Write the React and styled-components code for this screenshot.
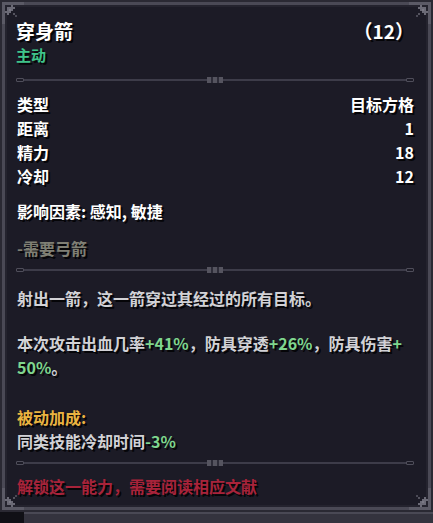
import styled, { createGlobalStyle } from 'styled-components';

const GlobalStyle = createGlobalStyle`
  html, body {
    margin: 0;
    padding: 0;
    background: #101016;
  }
  #root {
    width: 433px;
    height: 523px;
  }
`;

const Corner = ({ flipX, flipY }) => (
  <CornerSvg
    $flipX={flipX}
    $flipY={flipY}
    width="22"
    height="22"
    viewBox="0 0 22 22"
    shapeRendering="crispEdges"
  >
    <rect x="0" y="0" width="22" height="3" fill="#5b5a66" />
    <rect x="0" y="0" width="3" height="22" fill="#5b5a66" />
    <rect x="5" y="5" width="8" height="2" fill="#6b6a76" />
    <rect x="5" y="5" width="2" height="8" fill="#6b6a76" />
    <rect x="9" y="3" width="2" height="6" fill="#6b6a76" />
    <rect x="3" y="9" width="6" height="2" fill="#6b6a76" />
    <rect x="7" y="7" width="2" height="2" fill="#7a7985" />
    <rect x="11" y="11" width="2" height="2" fill="#55545f" />
    <rect x="13" y="13" width="2" height="2" fill="#4a4955" />
  </CornerSvg>
);

const Divider = ({ mt }) => (
  <DividerRow $mt={mt}>
    <Cap />
    <Line />
    <Knot />
    <Line />
    <Cap />
  </DividerRow>
);

const App = () => (
  <>
    <GlobalStyle />
    <Page>
      <Card>
        <Corner />
        <Corner flipX />
        <Corner flipY />
        <Corner flipX flipY />
        <Content>
          <TitleRow>
            <Title>穿身箭</Title>
            <Title>（12）</Title>
          </TitleRow>
          <Tag>主动</Tag>
          <Divider mt={10} />
          <Stats>
            <StatRow><span>类型</span><span>目标方格</span></StatRow>
            <StatRow><span>距离</span><span>1</span></StatRow>
            <StatRow><span>精力</span><span>18</span></StatRow>
            <StatRow><span>冷却</span><span>12</span></StatRow>
          </Stats>
          <Factors>影响因素: 感知, 敏捷</Factors>
          <Need>-需要弓箭</Need>
          <Divider mt={7} />
          <Desc $mt={13}>射出一箭，这一箭穿过其经过的所有目标。</Desc>
          <Desc $mt={21}>
            本次攻击出血几率<Good>+41%</Good>，防具穿透<Good>+26%</Good>，防具伤害<Good>+</Good>
            <br />
            <Good>50%</Good>。
          </Desc>
          <Passive>被动加成:</Passive>
          <Desc $mt={0}>同类技能冷却时间<Good>-3%</Good></Desc>
          <Divider mt={7} />
          <Locked>解锁这一能力，需要阅读相应文献</Locked>
        </Content>
      </Card>
      <BottomStrip />
    </Page>
  </>
);

const Page = styled.div`
  width: 433px;
  height: 523px;
  display: flex;
  flex-direction: column;
  font-family: "Noto Sans CJK SC", "Noto Sans", sans-serif;
  font-weight: 700;
  color: #f2f2f2;
`;

const Card = styled.div`
  position: relative;
  box-sizing: border-box;
  height: 512px;
  background: #1c1b26;
  border: 2px solid #2a2933;
  box-shadow: inset 0 0 0 3px #4a4955, inset 0 0 0 5px #24232e;
`;

const CornerSvg = styled.svg`
  position: absolute;
  ${p => (p.$flipX ? 'right: 0;' : 'left: 0;')}
  ${p => (p.$flipY ? 'bottom: 0;' : 'top: 0;')}
  transform: scale(${p => (p.$flipX ? -1 : 1)}, ${p => (p.$flipY ? -1 : 1)});
`;

const BottomStrip = styled.div`
  flex: 1;
  margin-left: 24px;
  background: #34333e;
  border-top: 2px solid #4a4955;
`;

const Content = styled.div`
  display: flex;
  flex-direction: column;
  padding: 17px 17px 0 14px;
  text-shadow: 2px 2px 0 #050508;
  line-height: 24px;
  font-size: 16px;
`;

const TitleRow = styled.div`
  display: flex;
  justify-content: space-between;
  align-items: center;
`;

const Title = styled.div`
  font-size: 19px;
  line-height: 24px;
  color: #ffffff;
`;

const Tag = styled.div`
  color: #3fc48a;
  font-size: 15px;
`;

const DividerRow = styled.div`
  display: flex;
  align-items: center;
  height: 6px;
  margin-top: ${p => p.$mt}px;
  text-shadow: none;
`;

const Line = styled.div`
  flex: 1;
  height: 2px;
  background: #3d3c49;
`;

const Cap = styled.div`
  width: 8px;
  height: 4px;
  border: 1px solid #4f4e5a;
  box-sizing: border-box;
  border-radius: 1px;
`;

const Knot = styled.div`
  width: 16px;
  height: 6px;
  background: repeating-linear-gradient(90deg, #55545f 0 4px, #2d2c38 4px 6px);
`;

const Stats = styled.div`
  display: flex;
  flex-direction: column;
  margin-top: 9px;
`;

const StatRow = styled.div`
  display: flex;
  justify-content: space-between;
  color: #ffffff;
  padding-left: 1px;
`;

const Factors = styled.div`
  margin-top: 11px;
  color: #ffffff;
  padding-left: 1px;
`;

const Need = styled.div`
  margin-top: 13px;
  color: #7f7f74;
  padding-left: 1px;
`;

const Desc = styled.div`
  margin-top: ${p => p.$mt}px;
  color: #d2d2d6;
  padding-left: 1px;
`;

const Good = styled.span`
  color: #7fd68e;
`;

const Passive = styled.div`
  margin-top: 26px;
  color: #e9b340;
  padding-left: 1px;
`;

const Locked = styled.div`
  margin-top: 8px;
  color: #a8233a;
  padding-left: 1px;
`;

export default App;
